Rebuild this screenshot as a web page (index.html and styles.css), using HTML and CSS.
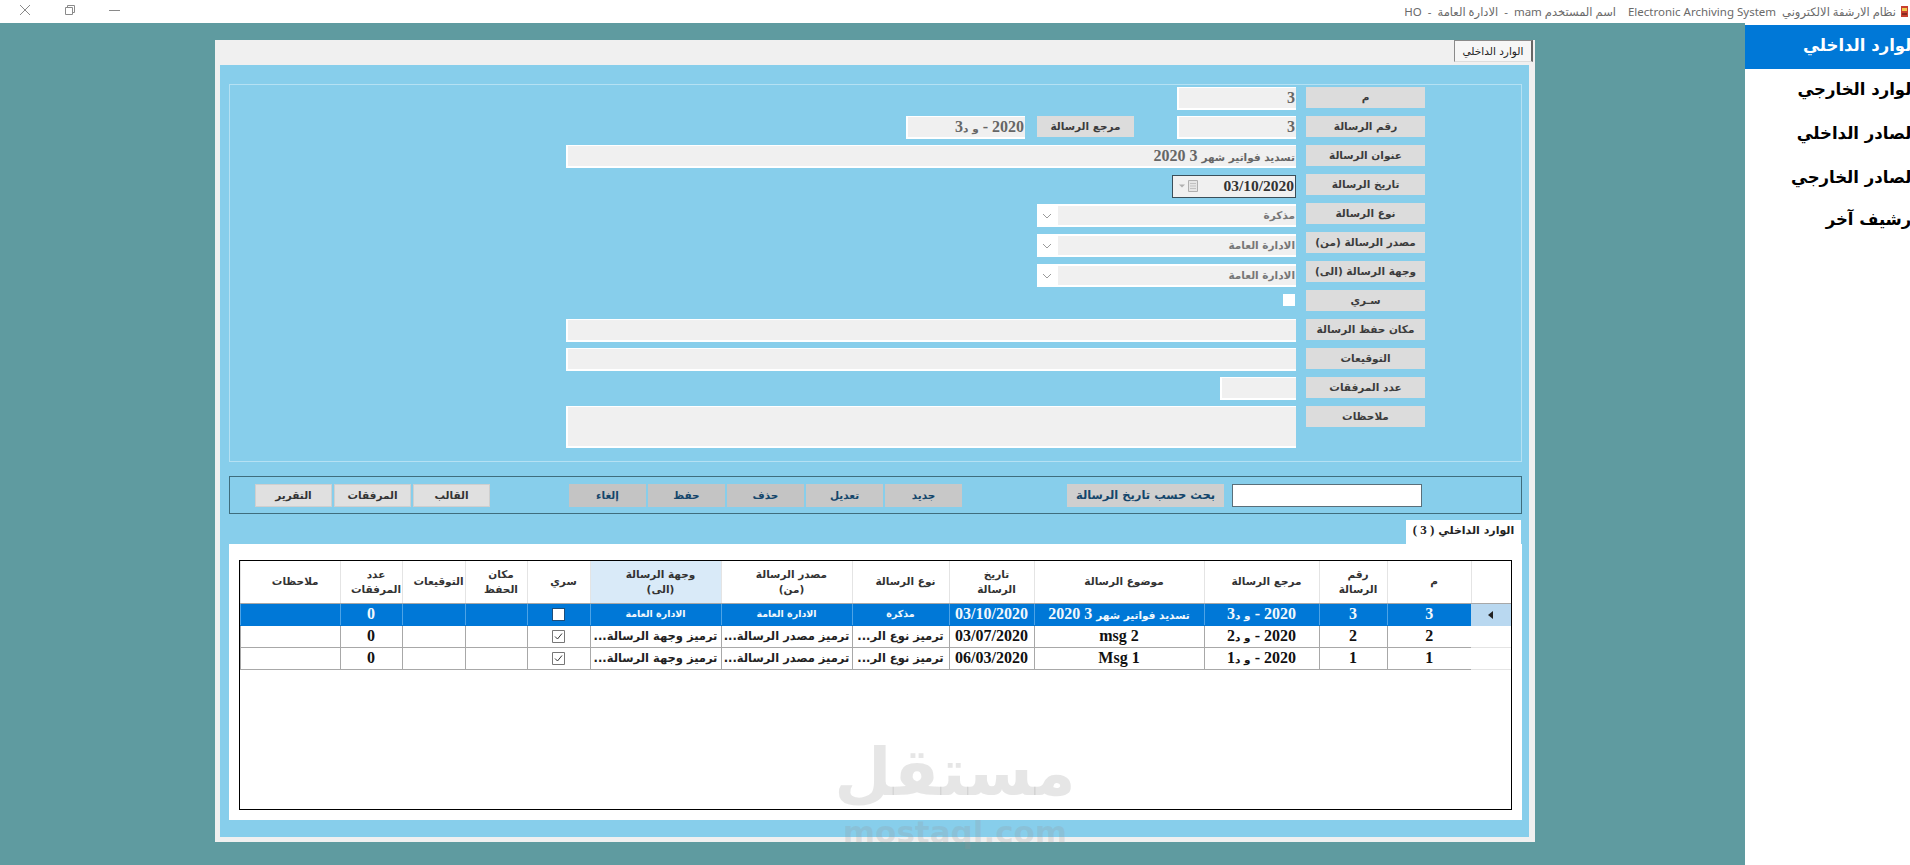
FILE: index.html
```html
<!DOCTYPE html>
<html lang="ar">
<head>
<meta charset="utf-8">
<title>Electronic Archiving System</title>
<link rel="stylesheet" href="styles.css">
</head>
<body>
<header class="titlebar">
  <div class="controls">
    <svg class="ctl" width="14" height="14" viewBox="0 0 14 14"><path d="M2 2l10 10M12 2L2 12" stroke="#8a8a8a" fill="none"/></svg>
    <svg class="ctl" width="14" height="14" viewBox="0 0 14 14"><path d="M2.500 4.500h7v7h-7zM4.500 4.500v-2h7v7h-2" stroke="#8a8a8a" fill="none"/></svg>
    <svg class="ctl" width="14" height="14" viewBox="0 0 14 14"><path d="M1 7.500h11" stroke="#8a8a8a" fill="none"/></svg>
  </div>
  <div class="apptitle">
    <span class="titletext">نظام الارشفة الالكتروني  Electronic Archiving System    اسم المستخدم mam  -  الادارة العامة  -  HO</span>
    <svg class="appicon" width="7" height="11" viewBox="0 0 7 11"><rect width="7" height="11" fill="#c8402f"/><rect x="1" y="2" width="5" height="3" fill="#f2c94c"/><rect x="1" y="7" width="5" height="2" fill="#8a2a20"/></svg>
  </div>
</header>

<div class="desktop">
  <main class="window">
    <div class="tabstrip"><div class="tab">الوارد الداخلي</div></div>
    <div class="panel">
      <section class="formgroup">
        <div class="row"><div class="lbl">م</div><div class="inp short num">3</div></div>
        <div class="row"><div class="lbl">رقم الرسالة</div><div class="inp short num">3</div><div class="lbl refbtn">مرجع الرسالة</div><div class="inp short num refval">2020 - <span class="ar">و د</span>3</div></div>
        <div class="row"><div class="lbl">عنوان الرسالة</div><div class="inp wide num"><span class="ar">تسديد فواتير شهر</span> 3 2020</div></div>
        <div class="row">
          <div class="lbl">تاريخ الرسالة</div>
          <div class="date">
            <span class="dateval">03/10/2020</span>
            <svg class="dateicon" width="22" height="14" viewBox="0 0 22 14"><path d="M10.500 1.500h9v11h-9z" fill="#e4e4e4" stroke="#a8a8a8"/><path d="M12 4.500h6M12 7h6M12 9.500h6" stroke="#bdbdbd"/><path d="M1 5.500h6l-3 3z" fill="#a8a8a8"/></svg>
          </div>
        </div>
        <div class="row"><div class="lbl">نوع الرسالة</div><div class="combo drop1"><span class="comboval">مذكرة</span><svg class="chev" width="10" height="6" viewBox="0 0 10 6"><path d="M1 1l4 4 4-4" stroke="#9a9a9a" fill="none"/></svg></div></div>
        <div class="row"><div class="lbl">مصدر الرسالة (من)</div><div class="combo drop2"><span class="comboval">الادارة العامة</span><svg class="chev" width="10" height="6" viewBox="0 0 10 6"><path d="M1 1l4 4 4-4" stroke="#9a9a9a" fill="none"/></svg></div></div>
        <div class="row"><div class="lbl">وجهة الرسالة (الى)</div><div class="combo drop3"><span class="comboval">الادارة العامة</span><svg class="chev" width="10" height="6" viewBox="0 0 10 6"><path d="M1 1l4 4 4-4" stroke="#9a9a9a" fill="none"/></svg></div></div>
        <div class="row"><div class="lbl">سـري</div><div class="check"></div></div>
        <div class="row"><div class="lbl">مكان حفظ الرسالة</div><div class="inp wide"></div></div>
        <div class="row"><div class="lbl">التوقيعات</div><div class="inp wide"></div></div>
        <div class="row"><div class="lbl">عدد المرفقات</div><div class="inp count"></div></div>
        <div class="row"><div class="lbl">ملاحظات</div><div class="inp wide notes"></div></div>
      </section>

      <section class="searchgroup">
        <div class="searchbox"></div>
        <div class="btn searchbtn">بحث حسب تاريخ الرسالة</div>
        <div class="btngroup first">
          <div class="btn blue">جديد</div>
          <div class="btn blue">تعديل</div>
          <div class="btn off">حذف</div>
          <div class="btn off">حفظ</div>
          <div class="btn off">إلغاء</div>
        </div>
        <div class="btngroup second">
          <div class="btn">القالب</div>
          <div class="btn">المرفقات</div>
          <div class="btn">التقرير</div>
        </div>
      </section>

      <div class="gridtabrow"><div class="gridtab">الوارد الداخلي <span class="gridcount">( 3 )</span></div></div>
      <section class="gridpanel">
        <div class="gridframe">
          <table class="grid">
            <colgroup>
              <col class="c0"><col class="c1"><col class="c2"><col class="c3"><col class="c4"><col class="c5"><col class="c6"><col class="c7"><col class="c8"><col class="c9"><col class="c10"><col class="c11"><col class="c12"><col class="c13">
            </colgroup>
            <thead>
              <tr>
                <th></th><th>م</th><th>رقم<br>الرسالة</th><th>مرجع الرسالة</th><th>موضوع الرسالة</th><th>تاريخ<br>الرسالة</th><th>نوع الرسالة</th><th>مصدر الرسالة<br>(من)</th><th class="sorted">وجهة الرسالة<br>(الى)</th><th>سري</th><th>مكان<br>الحفظ</th><th>التوقيعات</th><th>عدد<br>المرفقات</th><th>ملاحظات</th>
              </tr>
            </thead>
            <tbody>
              <tr class="sel">
                <td class="rh"><svg width="6" height="8" viewBox="0 0 6 8"><path d="M5 0v8L0 4z" fill="#222"/></svg></td>
                <td class="n">3</td><td class="n">3</td><td class="n">2020 - <span class="ar">و د</span>3</td><td class="n"><span class="ar">تسديد فواتير شهر</span> 3 2020</td><td class="n">03/10/2020</td><td class="t">مذكرة</td><td class="t">الادارة العامة</td><td class="t">الادارة العامة</td>
                <td><span class="cellcheck white"></span></td><td></td><td></td><td class="n">0</td><td></td>
              </tr>
              <tr>
                <td class="rh"></td>
                <td class="n">2</td><td class="n">2</td><td class="n">2020 - <span class="ar">و د</span>2</td><td class="n">msg 2</td><td class="n">03/07/2020</td><td class="t">ترميز نوع الر...</td><td class="t">ترميز مصدر الرسالة...</td><td class="t">ترميز وجهة الرسالة...</td>
                <td><svg class="cellcheck" width="13" height="13" viewBox="0 0 13 13"><path d="M.5.5h12v12H.5z" fill="#fff" stroke="#777"/><path d="M3 6.500l2.500 2.500L10 3.500" stroke="#333" fill="none"/></svg></td><td></td><td></td><td class="n">0</td><td></td>
              </tr>
              <tr>
                <td class="rh"></td>
                <td class="n">1</td><td class="n">1</td><td class="n">2020 - <span class="ar">و د</span>1</td><td class="n">Msg 1</td><td class="n">06/03/2020</td><td class="t">ترميز نوع الر...</td><td class="t">ترميز مصدر الرسالة...</td><td class="t">ترميز وجهة الرسالة...</td>
                <td><svg class="cellcheck" width="13" height="13" viewBox="0 0 13 13"><path d="M.5.5h12v12H.5z" fill="#fff" stroke="#777"/><path d="M3 6.500l2.500 2.500L10 3.500" stroke="#333" fill="none"/></svg></td><td></td><td></td><td class="n">0</td><td></td>
              </tr>
            </tbody>
          </table>
        </div>
      </section>
    </div>
  </main>

  <nav class="sidebar">
    <div class="navitem active"><span>الوارد الداخلي</span></div>
    <div class="navitem"><span>الوارد الخارجي</span></div>
    <div class="navitem"><span>الصادر الداخلي</span></div>
    <div class="navitem"><span>الصادر الخارجي</span></div>
    <div class="navitem"><span>أرشيف آخر</span></div>
  </nav>
</div>

<div class="watermark">
  <div class="wmlogo">مستقل</div>
  <div class="wmurl">mostaql.com</div>
</div>
</body>
</html>
```
FILE: styles.css
```css
* { box-sizing: border-box; }
html, body { margin: 0; padding: 0; }
body {
  width: 1910px;
  height: 865px;
  overflow: hidden;
  position: relative;
  background: #5f9ba0;
  font-family: "Liberation Serif", "DejaVu Sans", serif;
}

/* title bar */
.titlebar {
  height: 23px;
  background: #fff;
  display: flex;
  justify-content: space-between;
  align-items: center;
}
.controls { display: flex; gap: 31px; padding-left: 18px; margin-top: -3px; }
.apptitle { display: flex; align-items: center; direction: rtl; margin-top: -1px; }
.appicon { margin-left: 5px; margin-right: 2px; order: -1; }
.titletext {
  font: 11.500px "Noto Sans", "DejaVu Sans", sans-serif;
  color: #6a6a6a;
  white-space: pre;
}

/* desktop */
.desktop { display: flex; height: 842px; }
.window {
  margin: 17px 0 0 215px;
  width: 1320px;
  height: 802px;
  background: #f0f0f0;
  padding: 0 6px 5px 5px;
  display: flex;
  flex-direction: column;
  direction: rtl;
}
.tabstrip { height: 25px; flex: none; display: flex; margin-right: -4px; }
.tab {
  width: 79px;
  height: 22px;
  background: #f6f6f6;
  border-top: 1px solid #8a8a8a;
  border-left: 1px solid #8a8a8a;
  border-right: 2px solid #666;
  border-bottom: 1px solid #ddd;
  text-align: center;
  font: 10.500px/20px "DejaVu Sans", sans-serif;
  color: #222;
}
.panel {
  flex: 1;
  background: #87ceeb;
  padding: 19px 7px 17px 9px;
  display: flex;
  flex-direction: column;
}

/* form */
.formgroup {
  height: 378px;
  border: 1px solid #b5e1f3;
  padding: 2px 96px 0 0;
  flex: none;
}
.row { height: 29px; display: flex; align-items: flex-start; }
.lbl {
  width: 119px;
  height: 21px;
  background: #dcdcdc;
  text-align: center;
  font: bold 10.500px/20px "DejaVu Sans", sans-serif;
  color: #3c3c3c;
  flex: none;
}
.inp {
  height: 23px;
  background: #f0f0f0;
  border: 2px solid #fff;
  border-top-width: 1px;
  border-right: 0;
  margin-right: 10px;
  flex: none;
  color: #666;
  padding: 0 1px;
}
.num { font: bold 16px/20px "Liberation Serif", "DejaVu Sans", serif; }
.ar { font: bold 10.500px "DejaVu Sans", sans-serif; }
.short { width: 119px; }
.wide { width: 730px; border-right: 0; }
.count { width: 76px; }
.notes { height: 42px; }
.refbtn { width: 97px; margin-right: 43px; }
.inp.refval { margin-right: 12px; }
.date {
  width: 124px;
  height: 23px;
  margin: 1px 10px 0 0;
  background: #f0f0f0;
  border: 1px solid #3b4f5a;
  display: flex;
  align-items: center;
  justify-content: space-between;
  padding: 0 1px 2px 5px;
}
.dateval { font: bold 15.500px "Liberation Serif", serif; color: #333; }
.dateicon { order: 1; opacity: .9; }
.combo {
  width: 259px;
  height: 23px;
  margin-right: 10px;
  background: #fff;
  display: flex;
  justify-content: space-between;
  align-items: center;
  padding: 2px 0;
}
.drop1 { margin-top: 1px; }
.drop2 { margin-top: 2px; }
.drop3 { margin-top: 3px; }
.comboval {
  width: 238px;
  height: 19px;
  background: #f0f0f0;
  font: bold 10.500px/18px "DejaVu Sans", sans-serif;
  color: #777;
  padding-right: 1px;
}
.chev { margin-left: 5px; }
.check {
  width: 12px;
  height: 12px;
  background: #fff;
  margin: 4px 11px 0 0;
}

/* search */
.searchgroup {
  height: 38px;
  margin-top: 14px;
  border: 1px solid #3f6d7d;
  padding: 7px 99px 0 0;
  display: flex;
  align-items: flex-start;
  flex: none;
}
.searchbox {
  width: 190px;
  height: 23px;
  background: #fff;
  border: 1px solid #5a6f7a;
  flex: none;
}
.btn {
  width: 77px;
  height: 23px;
  background: #e0e0e0;
  text-align: center;
  font: bold 10.500px/21px "DejaVu Sans", sans-serif;
  color: #333;
  border: 1px solid #cfcfcf;
  flex: none;
}
.btn.blue { background: #c8c8c8; color: #14466b; border-color: #c8c8c8; }
.btn.off { background: #c4c4c4; color: #14466b; border-color: #c4c4c4; }
.searchbtn { width: 157px; margin-right: 8px; background: #cfcfcf; color: #14466b; border-color: #cfcfcf; font-size: 11.500px; }
.btngroup { display: flex; gap: 2px; }
.first { margin-right: 105px; }
.second { margin-right: 79px; }

/* grid */
.gridtabrow { display: flex; margin-top: 6px; padding-right: 1px; flex: none; }
.gridtab {
  width: 115px;
  height: 24px;
  background: #fff;
  text-align: center;
  font: bold 11px/22px "DejaVu Sans", sans-serif;
  color: #222;
}
.gridcount { font: bold 13px "Liberation Serif", serif; }
.gridpanel {
  flex: none;
  height: 276px;
  background: #fff;
  padding: 16px 10px 10px;
}
.gridframe {
  height: 100%;
  border: 1px solid #000;
  background: #fff;
  overflow: hidden;
}
.grid {
  width: 100%;
  table-layout: fixed;
  border-collapse: collapse;
  color: #222;
}
.c0 { width: 40px; }
.c1 { width: 84px; }
.c2 { width: 68px; }
.c3 { width: 115px; }
.c4 { width: 170px; }
.c5 { width: 85px; }
.c6 { width: 97px; }
.c7 { width: 131px; }
.c8 { width: 131px; }
.c9 { width: 63px; }
.c10 { width: 62px; }
.c11 { width: 63px; }
.c12 { width: 62px; }
.c13 { width: auto; }
.grid th {
  height: 42px;
  padding: 0 0 0 10px;
  font: bold 10.500px/15px "DejaVu Sans", sans-serif;
  color: #333;
  border-left: 1px solid #e4e4e4;
  border-bottom: 1px solid #a8a8a8;
  background: #fff;
  text-align: center;
}
.grid th.sorted { background: #d9eaf8; }
.grid td {
  height: 22px;
  padding: 0;
  text-align: center;
  white-space: nowrap;
  overflow: hidden;
  border-left: 1px solid #a8a8a8;
  border-bottom: 1px solid #a8a8a8;
  vertical-align: middle;
}
.grid td.n { font: bold 16px/20px "Liberation Serif", "DejaVu Sans", serif; color: #111; }
.grid td.t { font: bold 11.500px/20px "DejaVu Sans", sans-serif; color: #222; }
.grid td.rh { border-left: 0; border-bottom: 1px solid #e4e4e4; background: #fff; text-align: center; }
.grid tr.sel td { background: #0078d7; color: #fff; border-left-color: #4da3e6; border-bottom-color: #0078d7; }
.grid tr.sel td.rh { background: #b9d8f0; border-bottom-color: #b9d8f0; border-left: 0; }
.grid tr.sel td.n { color: #f2f8fd; }
.grid tr.sel td.t { color: #f2f8fd; font: bold 9.500px/20px "DejaVu Sans", sans-serif; }
.cellcheck { display: block; margin: 0 auto; }
.cellcheck.white { width: 13px; height: 13px; background: #fff; border: 1px solid #1f4e79; }

/* sidebar */
.sidebar {
  margin-left: auto;
  width: 165px;
  background: #fff;
  padding-top: 2px;
  direction: rtl;
  overflow: hidden;
}
.navitem {
  height: 44px;
  white-space: nowrap;
  font: bold 16.500px/42px "DejaVu Sans", sans-serif;
  color: #000;
}
.navitem:last-child { line-height: 38px; }
.navitem span { display: inline-block; margin-right: -7px; }
.navitem.active { background: #0078d7; color: #fff; }

/* watermark */
.watermark {
  position: absolute;
  left: 780px;
  top: 730px;
  width: 350px;
  text-align: center;
  pointer-events: none;
}
.wmlogo {
  font: bold 66px/86px "DejaVu Sans", sans-serif;
  color: rgba(150, 150, 150, .24);
}
.wmurl {
  font: bold 31px/32px "DejaVu Sans", sans-serif;
  color: rgba(150, 150, 150, .22);
}
```
